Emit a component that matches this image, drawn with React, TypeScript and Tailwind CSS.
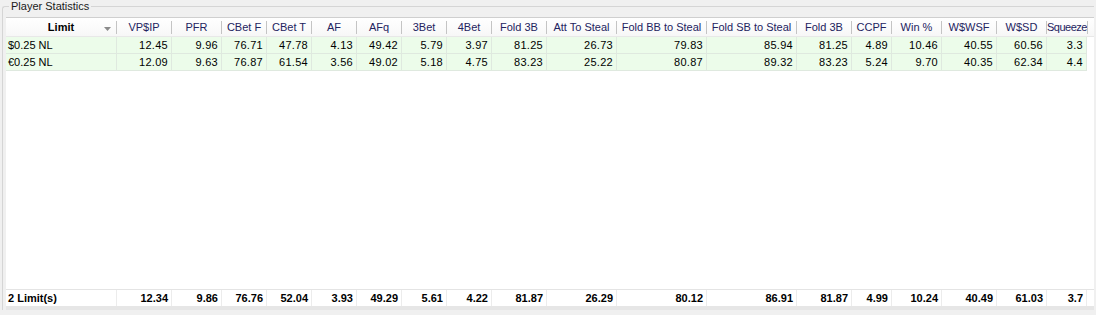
const COLS =
  'grid grid-cols-[111px_55px_50px_45px_45px_45px_45px_45px_45px_55px_70px_90px_90px_55px_40px_50px_55px_50px_40px_1fr]';

const HEADERS = [
  'Limit',
  'VP$IP',
  'PFR',
  'CBet F',
  'CBet T',
  'AF',
  'AFq',
  '3Bet',
  '4Bet',
  'Fold 3B',
  'Att To Steal',
  'Fold BB to Steal',
  'Fold SB to Steal',
  'Fold 3B',
  'CCPF',
  'Win %',
  'W$WSF',
  'W$SD',
  'Squeeze',
];

const ROWS = [
  ['$0.25 NL', '12.45', '9.96', '76.71', '47.78', '4.13', '49.42', '5.79', '3.97', '81.25', '26.73', '79.83', '85.94', '81.25', '4.89', '10.46', '40.55', '60.56', '3.3'],
  ['€0.25 NL', '12.09', '9.63', '76.87', '61.54', '3.56', '49.02', '5.18', '4.75', '83.23', '25.22', '80.87', '89.32', '83.23', '5.24', '9.70', '40.35', '62.34', '4.4'],
];

const TOTALS = ['2 Limit(s)', '12.34', '9.86', '76.76', '52.04', '3.93', '49.29', '5.61', '4.22', '81.87', '26.29', '80.12', '86.91', '81.87', '4.99', '10.24', '40.49', '61.03', '3.7'];

export default function App() {
  return (
    <div className="w-[1096px] h-[315px] bg-[#f0f0f0] text-[11px] text-black font-['Liberation_Sans',Arial,sans-serif]">
      <div className="h-[6px]" />
      {/* group box */}
      <div className="ml-[2px] w-[1092px] h-[304px] border-l border-t border-[#d5d5d5] rounded-tl-[3px] pl-[3px]">
        <div className="-mt-[7px] ml-[3px] w-fit px-[2px] bg-[#f0f0f0] leading-[13px] text-[#1a1a1a]">
          Player Statistics
        </div>
        <div className="mt-[4px] h-[293px] flex flex-col bg-white border-t border-[#cfcfcf] border-b-[4px] border-b-[#e6e6e6]">
          <HeaderRow />
          {ROWS.map((row, i) => (
            <DataRow key={i} cells={row} />
          ))}
          <div className="flex-1" />
          <FooterRow cells={TOTALS} />
        </div>
      </div>
    </div>
  );
}

function HeaderRow() {
  return (
    <div className={`${COLS} h-[19px] border-b border-[#e8e8e8] bg-gradient-to-b from-white to-[#f7f7f7]`}>
      {HEADERS.map((h, i) => (
        <div key={i} className="relative flex items-center">
          <span
            className={
              i === 0
                ? 'flex-1 text-center font-bold text-black whitespace-nowrap'
                : i === HEADERS.length - 1
                  ? 'flex-1 text-center text-[#23235f] whitespace-nowrap tracking-[-0.5px]'
                  : 'flex-1 text-center text-[#23235f] whitespace-nowrap'
            }
          >
            {h}
          </span>
          {i === 0 && (
            <svg className="absolute right-[6px] top-[9px] w-[7px] h-[4px]" viewBox="0 0 7 4">
              <path d="M0 0 L7 0 L3.5 4 Z" fill="#8a8a8a" />
            </svg>
          )}
          <span className="w-px h-[13px] bg-[#c4c4c4] shrink-0" />
        </div>
      ))}
      <div />
    </div>
  );
}

function DataRow({ cells }: { cells: string[] }) {
  return (
    <div className={`${COLS} h-[17px]`}>
      {cells.map((c, i) => (
        <div
          key={i}
          className={
            i === 0
              ? 'bg-[#ecfcea] border-r border-b border-[#dfe9df] pl-[2px] leading-[16px] whitespace-nowrap'
              : 'bg-[#ecfcea] border-r border-b border-[#dfe9df] pr-[3px] text-right leading-[16px] tracking-[0.3px] whitespace-nowrap'
          }
        >
          {c}
        </div>
      ))}
      <div />
    </div>
  );
}

function FooterRow({ cells }: { cells: string[] }) {
  return (
    <div className={`${COLS} h-[17px] border-t border-[#e4e4e4] font-bold`}>
      {cells.map((c, i) => (
        <div
          key={i}
          className={
            i === 0
              ? 'border-r border-[#ececec] pl-[2px] leading-[16px] whitespace-nowrap'
              : 'border-r border-[#ececec] pr-[3px] text-right leading-[16px] whitespace-nowrap'
          }
        >
          {c}
        </div>
      ))}
      <div />
    </div>
  );
}
